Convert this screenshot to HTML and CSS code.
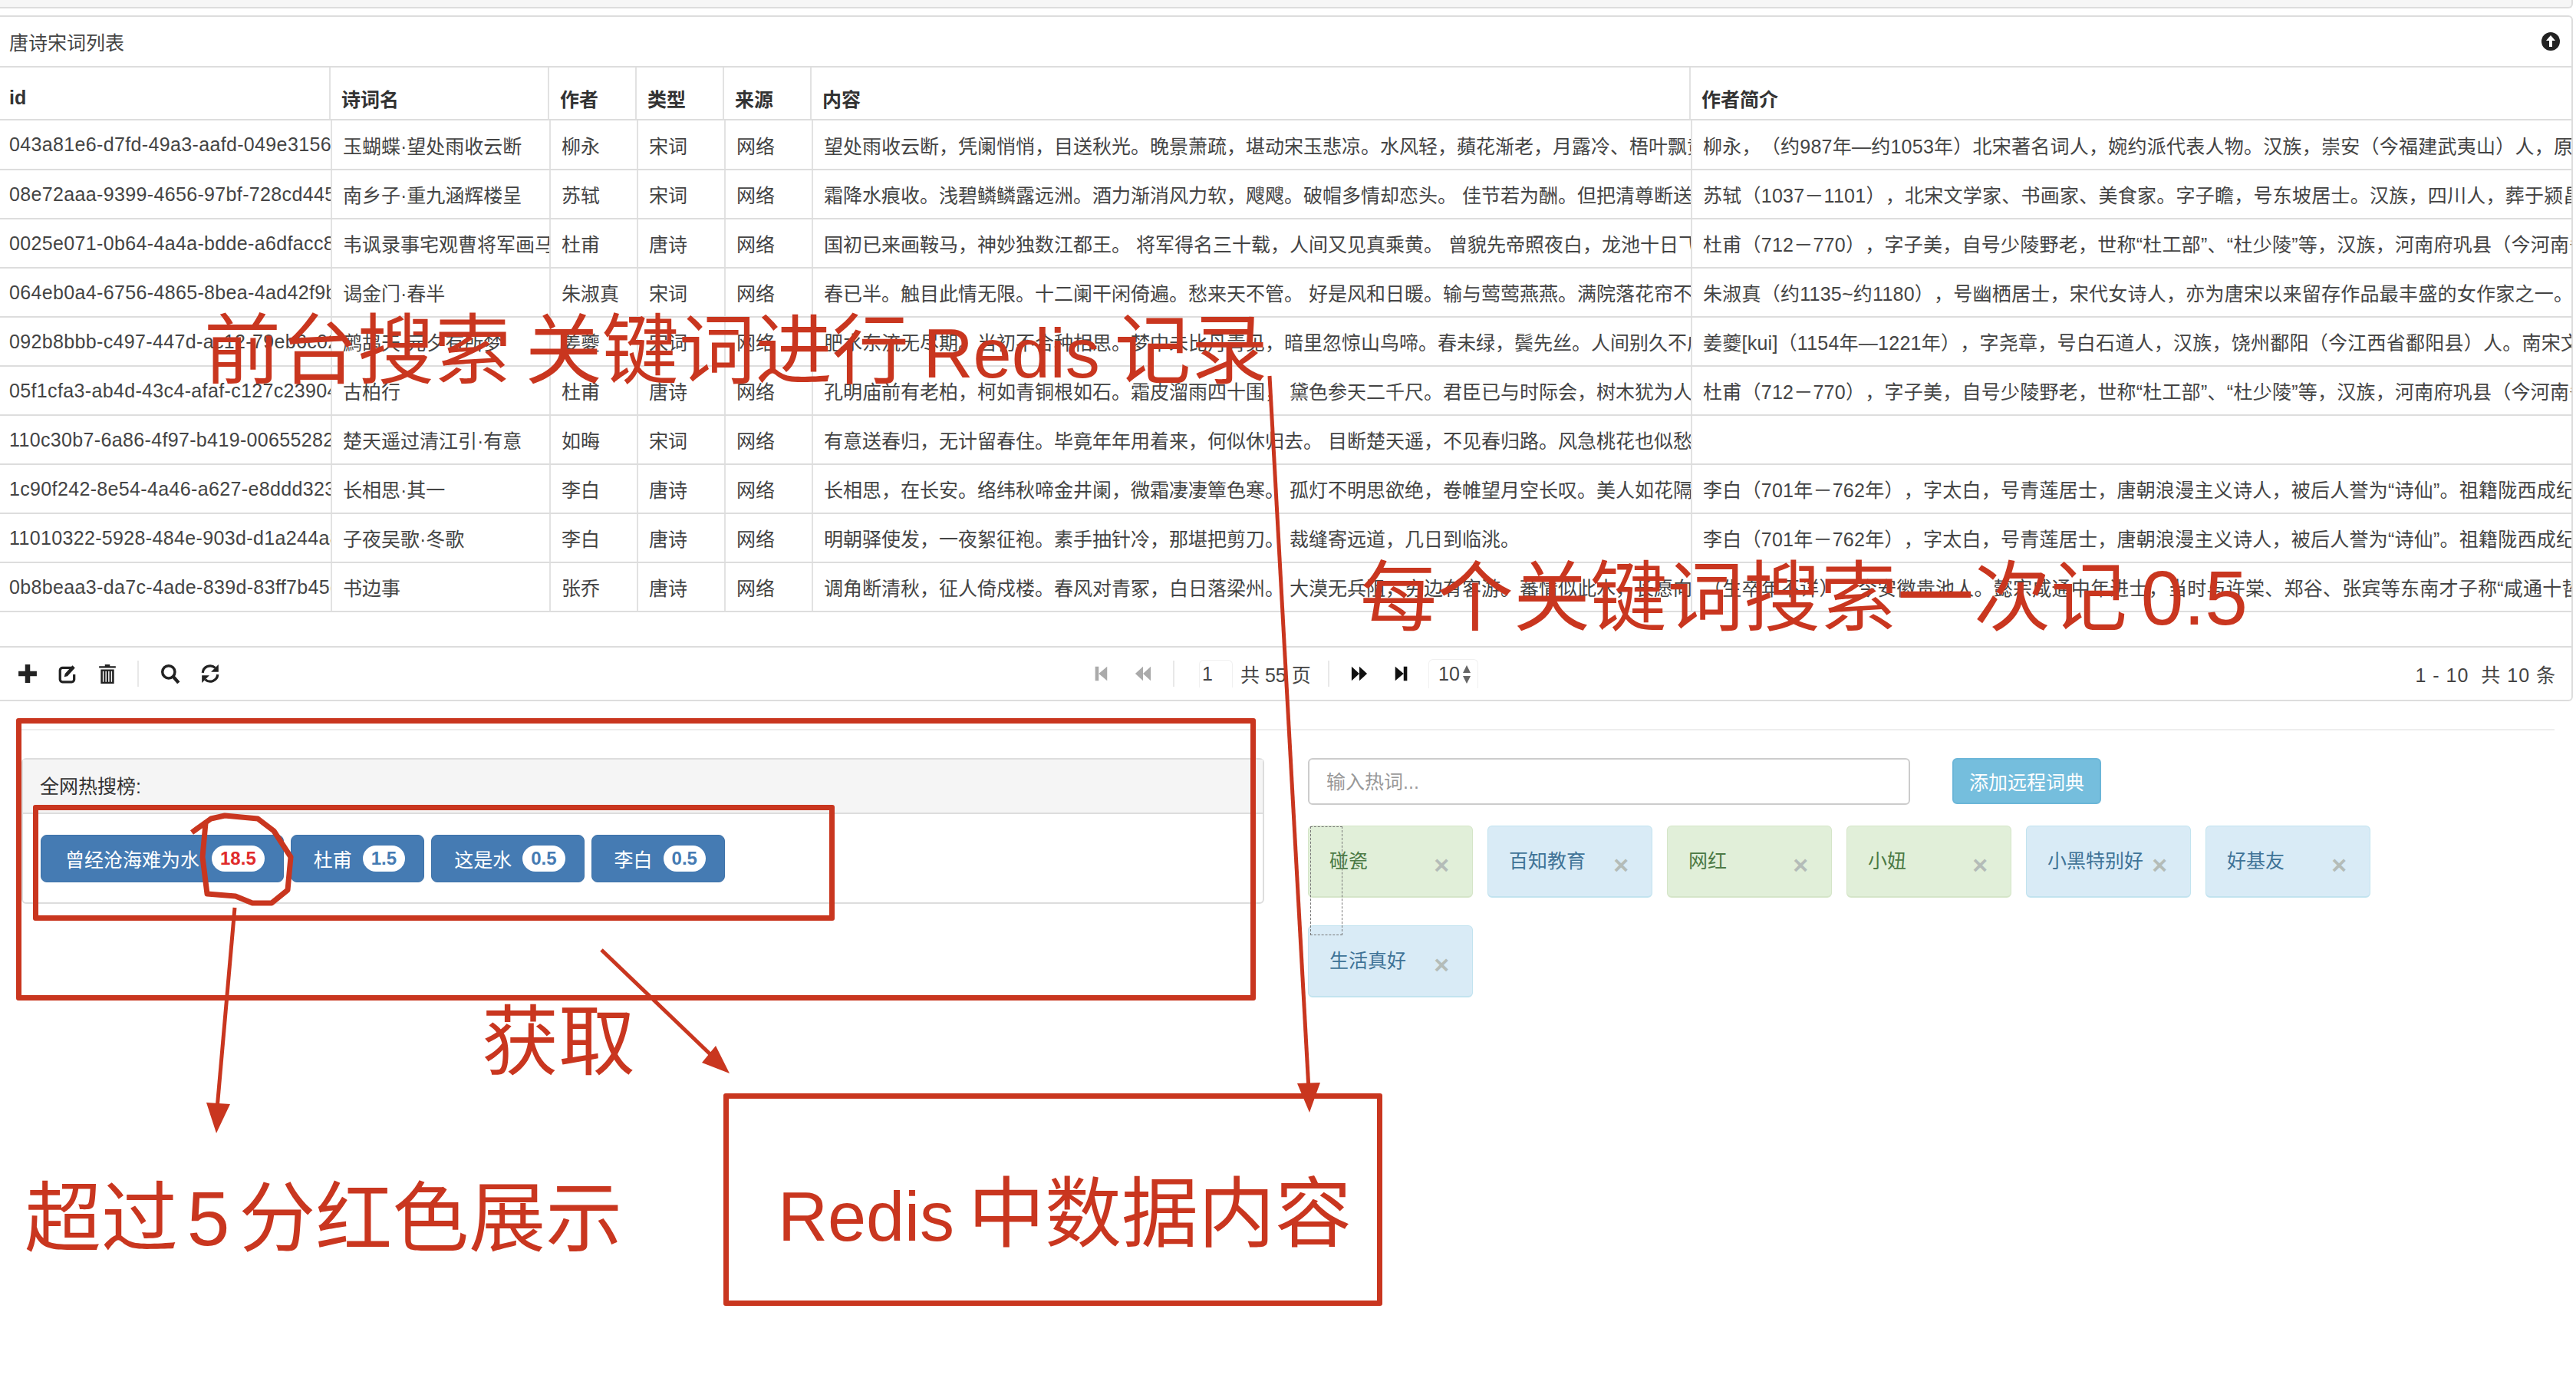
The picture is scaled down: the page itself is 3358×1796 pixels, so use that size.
FILE: index.html
```html
<!DOCTYPE html>
<html lang="zh-CN">
<head>
  <meta charset="UTF-8" />
  <title>唐诗宋词列表</title>
  <link rel="stylesheet" href="styles.css">
</head>
<body>
  <div class="top-strip"></div>

  <section class="grid-panel">
    <header class="grid-title">
      <span>唐诗宋词列表</span>
      <svg class="collapse-icon" viewBox="0 0 24 24" width="24" height="24"><circle cx="12" cy="12" r="12" fill="#222"/><path d="M12 4l6 7h-4v8h-4v-8H6z" fill="#fff"/></svg>
    </header>

    <table class="grid-table grid-head">
      <colgroup><col class="c-id-h"><col class="c-name"><col class="c-small"><col class="c-small"><col class="c-small"><col class="c-content"><col class="c-intro-h"></colgroup>
      <tr><th>id</th><th>诗词名</th><th>作者</th><th>类型</th><th>来源</th><th>内容</th><th>作者简介</th></tr>
    </table>

    <table class="grid-table grid-body">
      <colgroup><col class="c-id"><col class="c-name"><col class="c-small"><col class="c-small"><col class="c-small"><col class="c-content"><col class="c-intro"></colgroup>
      <tr><td>043a81e6-d7fd-49a3-aafd-049e31562c8f</td><td>玉蝴蝶·望处雨收云断</td><td>柳永</td><td>宋词</td><td>网络</td><td>望处雨收云断，凭阑悄悄，目送秋光。晚景萧疏，堪动宋玉悲凉。水风轻，蘋花渐老，月露冷、梧叶飘黄。</td><td>柳永，（约987年—约1053年）北宋著名词人，婉约派代表人物。汉族，崇安（今福建武夷山）人，原名三变，字景庄。</td></tr>
      <tr><td>08e72aaa-9399-4656-97bf-728cd4451c2a</td><td>南乡子·重九涵辉楼呈</td><td>苏轼</td><td>宋词</td><td>网络</td><td>霜降水痕收。浅碧鳞鳞露远洲。酒力渐消风力软，飕飕。破帽多情却恋头。 佳节若为酬。但把清尊断送秋。</td><td>苏轼（1037－1101），北宋文学家、书画家、美食家。字子瞻，号东坡居士。汉族，四川人，葬于颍昌。</td></tr>
      <tr><td>0025e071-0b64-4a4a-bdde-a6dfacc8e1d3</td><td>韦讽录事宅观曹将军画马图</td><td>杜甫</td><td>唐诗</td><td>网络</td><td>国初已来画鞍马，神妙独数江都王。 将军得名三十载，人间又见真乘黄。 曾貌先帝照夜白，龙池十日飞霹雳。</td><td>杜甫（712－770），字子美，自号少陵野老，世称“杜工部”、“杜少陵”等，汉族，河南府巩县（今河南省巩义市）人。</td></tr>
      <tr><td>064eb0a4-6756-4865-8bea-4ad42f9b70c1</td><td>谒金门·春半</td><td>朱淑真</td><td>宋词</td><td>网络</td><td>春已半。触目此情无限。十二阑干闲倚遍。愁来天不管。 好是风和日暖。输与莺莺燕燕。满院落花帘不卷。</td><td>朱淑真（约1135~约1180），号幽栖居士，宋代女诗人，亦为唐宋以来留存作品最丰盛的女作家之一。</td></tr>
      <tr><td>092b8bbb-c497-447d-ac12-79eb6c02a4f7</td><td>鹧鸪天·元夕有所梦</td><td>姜夔</td><td>宋词</td><td>网络</td><td>肥水东流无尽期。当初不合种相思。梦中未比丹青见，暗里忽惊山鸟啼。春未绿，鬓先丝。人间别久不成悲。</td><td>姜夔[kui]（1154年—1221年），字尧章，号白石道人，汉族，饶州鄱阳（今江西省鄱阳县）人。南宋文学家、音乐家。</td></tr>
      <tr><td>05f1cfa3-ab4d-43c4-afaf-c127c23904be</td><td>古柏行</td><td>杜甫</td><td>唐诗</td><td>网络</td><td>孔明庙前有老柏，柯如青铜根如石。霜皮溜雨四十围， 黛色参天二千尺。君臣已与时际会，树木犹为人爱惜。</td><td>杜甫（712－770），字子美，自号少陵野老，世称“杜工部”、“杜少陵”等，汉族，河南府巩县（今河南省巩义市）人。</td></tr>
      <tr><td>110c30b7-6a86-4f97-b419-006552827d9e</td><td>楚天遥过清江引·有意</td><td>如晦</td><td>宋词</td><td>网络</td><td>有意送春归，无计留春住。毕竟年年用着来，何似休归去。 目断楚天遥，不见春归路。风急桃花也似愁，点点飞红雨。</td><td></td></tr>
      <tr><td>1c90f242-8e54-4a46-a627-e8ddd3235b06</td><td>长相思·其一</td><td>李白</td><td>唐诗</td><td>网络</td><td>长相思，在长安。络纬秋啼金井阑，微霜凄凄簟色寒。 孤灯不明思欲绝，卷帷望月空长叹。美人如花隔云端。</td><td>李白（701年－762年），字太白，号青莲居士，唐朝浪漫主义诗人，被后人誉为“诗仙”。祖籍陇西成纪。</td></tr>
      <tr><td>11010322-5928-484e-903d-d1a244a8f312</td><td>子夜吴歌·冬歌</td><td>李白</td><td>唐诗</td><td>网络</td><td>明朝驿使发，一夜絮征袍。素手抽针冷，那堪把剪刀。 裁缝寄远道，几日到临洮。</td><td>李白（701年－762年），字太白，号青莲居士，唐朝浪漫主义诗人，被后人誉为“诗仙”。祖籍陇西成纪。</td></tr>
      <tr><td>0b8beaa3-da7c-4ade-839d-83ff7b45c6a0</td><td>书边事</td><td>张乔</td><td>唐诗</td><td>网络</td><td>调角断清秋，征人倚戍楼。春风对青冢，白日落梁州。 大漠无兵阻，穷边有客游。蕃情似此水，长愿向南流。</td><td>（生卒年不详），今安徽贵池人。懿宗咸通中年进士，当时与许棠、郑谷、张宾等东南才子称“咸通十哲”。</td></tr>
    </table>

    <footer class="grid-toolbar">
      <div class="tool-group">
        <svg class="tool" viewBox="0 0 24 24"><path d="M9 1h6v8h8v6h-8v8H9v-8H1V9h8z" fill="#222"/></svg>
        <svg class="tool" viewBox="0 0 24 24"><path d="M17 5H6a3 3 0 0 0-3 3v11a3 3 0 0 0 3 3h11a3 3 0 0 0 3-3v-6" fill="none" stroke="#222" stroke-width="3"/><path d="M9 12l9-10 3 3-9 10-4 1z" fill="#222"/></svg>
        <svg class="tool" viewBox="0 0 24 24"><path d="M2 3h7V1h6v2h7v2H2zM4 7h16v17H4z" fill="#222"/><path d="M7 9v13M10.3 9v13M13.7 9v13M17 9v13" stroke="#fff" stroke-width="1.3"/></svg>
        <span class="tool-sep"></span>
        <svg class="tool" viewBox="0 0 24 24"><circle cx="10" cy="10" r="7.5" fill="none" stroke="#222" stroke-width="3.2"/><path d="M15 15l7 8" stroke="#222" stroke-width="4"/></svg>
        <svg class="tool" viewBox="0 0 24 24"><path d="M3 11a9 9 0 0 1 15-6" fill="none" stroke="#222" stroke-width="3"/><path d="M22 1v9h-9z" fill="#222"/><path d="M21 13a9 9 0 0 1-15 6" fill="none" stroke="#222" stroke-width="3"/><path d="M2 23v-9h9z" fill="#222"/></svg>
      </div>

      <div class="pager">
        <svg class="pg" viewBox="0 0 24 24"><path d="M4 2h5v20H4zM21 2v20L9 12z" fill="#aaa"/></svg>
        <svg class="pg pg-prev" viewBox="0 0 24 24"><path d="M12 2v20L1 12zM23 2v20L12 12z" fill="#aaa"/></svg>
        <span class="tool-sep pager-sep"></span>
        <span class="pg-input">1</span>
        <span class="pg-total">共 55 页</span>
        <span class="tool-sep pager-sep-2"></span>
        <svg class="pg pg-next" viewBox="0 0 24 24"><path d="M1 2v20l11-10zM12 2v20l11-10z" fill="#111"/></svg>
        <svg class="pg pg-last" viewBox="0 0 24 24"><path d="M3 2v20l12-10zM15 2h5v20h-5z" fill="#111"/></svg>
        <span class="pg-select">10
          <svg viewBox="0 0 10 26" width="10" height="26"><path d="M5 1l5 10H0zM5 25L0 15h10z" fill="#666"/></svg>
        </span>
      </div>

      <div class="grid-count">1 - 10&nbsp;&nbsp;共 10 条</div>
    </footer>
  </section>

  <hr class="divider">

  <main class="hot-row">
    <section class="hot-panel">
      <div class="hot-heading">全网热搜榜:</div>
      <div class="hot-body">
        <button class="hot-btn">曾经沧海难为水<span class="badge badge-red">18.5</span></button>
        <button class="hot-btn">杜甫<span class="badge">1.5</span></button>
        <button class="hot-btn">这是水<span class="badge">0.5</span></button>
        <button class="hot-btn">李白<span class="badge">0.5</span></button>
      </div>
    </section>

    <section class="dict">
      <div class="dict-form">
        <div class="dict-input">输入热词...</div>
        <button class="dict-add">添加远程词典</button>
      </div>
      <div class="tags">
        <div class="tag tag-green">碰瓷<span class="tag-x">×</span></div>
        <div class="tag tag-blue">百知教育<span class="tag-x">×</span></div>
        <div class="tag tag-green">网红<span class="tag-x">×</span></div>
        <div class="tag tag-green">小妞<span class="tag-x">×</span></div>
        <div class="tag tag-blue">小黑特别好<span class="tag-x">×</span></div>
        <div class="tag tag-blue">好基友<span class="tag-x">×</span></div>
        <div class="tag tag-blue">生活真好<span class="tag-x">×</span></div>
      </div>
    </section>
  </main>

  <div class="drag-ghost"></div>

  <!-- 红色标注 -->
  <div class="mark-box box-outer"></div>
  <div class="mark-box box-inner"></div>
  <div class="mark-box box-redis"></div>
  <svg class="mark-lines" viewBox="0 0 3358 1796" width="3358" height="1796">
    <g fill="none" stroke="#c9361f" stroke-width="5">
      <path d="M1655 490L1706 1420"/>
      <path d="M306 1183L283 1445"/>
      <path d="M784 1238L930 1378" />
    </g>
    <path d="M1691 1412l30-1-14 39z" fill="#c9361f"/>
    <path d="M269 1437l31 2-18 38z" fill="#c9361f"/>
    <path d="M933 1363l18 36-36-14z" fill="#c9361f"/>
    <path d="M250 1085L275 1067 293 1063 336 1067 357 1083 379 1117 375 1160 354 1177 329 1177 307 1168 270 1165 264 1117 268 1073" fill="none" stroke="#c9361f" stroke-width="7" stroke-linejoin="round"/>
  </svg>
  <div class="mark-text text-search">前台搜索 关键词进行 <span class="mark-latin">Redis</span> 记录</div>
  <div class="mark-text text-score">每个关键词搜索一次记 0.5</div>
  <div class="mark-text text-get">获取</div>
  <div class="mark-text text-over">超过 5 分红色展示</div>
  <div class="mark-text text-redis"><span class="mark-latin">Redis</span> 中数据内容</div>
</body>
</html>
```

FILE: styles.css
```css
* {
  box-sizing: border-box;
}

html, body {
  margin: 0;
  padding: 0;
}

body {
  position: relative;
  width: 3358px;
  height: 1796px;
  overflow: hidden;
  background: #fff;
  color: #333;
  font-family: "Liberation Sans", "Noto Sans CJK SC", sans-serif;
  font-size: 25px;
  text-spacing-trim: space-all;
}

.top-strip {
  width: 3354px;
  height: 11px;
  background: #f6f6f6;
  border-bottom: 2px solid #ddd;
  border-right: 2px solid #ddd;
  border-radius: 0 0 6px 0;
}

/* 表格面板 */
.grid-panel {
  width: 3354px;
  margin-top: 9px;
  border: 2px solid #ddd;
  border-left: none;
  border-radius: 0 6px 6px 0;
}

.grid-title {
  display: flex;
  justify-content: space-between;
  align-items: center;
  height: 66px;
  padding: 0 16px 0 12px;
  border-bottom: 2px solid #ddd;
  color: #444;
}

.collapse-icon {
  margin-right: -1px;
}

.grid-table {
  border-collapse: collapse;
  table-layout: fixed;
  width: 3352px;
}

.grid-table th, .grid-table td {
  overflow: hidden;
  white-space: nowrap;
  padding: 0 12px 0 14px;
  border-right: 2px solid #e2e2e2;
  border-bottom: 2px solid #ddd;
  text-align: left;
  height: 64px;
}

.grid-table th:first-child, .grid-table td:first-child {
  padding-left: 12px;
  padding-right: 0;
}

.grid-table td:first-child {
  letter-spacing: 0.35px;
}

.grid-table td:last-child, .grid-table th:last-child {
  border-right: none;
  padding-right: 0;
}

.grid-table td:last-child {
  letter-spacing: 0.25px;
}

.grid-table th {
  height: 68px;
  padding-top: 12px;
  font-weight: 700;
  color: #333;
}

.grid-table td {
  color: #444;
}

.c-id-h { width: 430px; }
.c-id { width: 432px; }
.c-name { width: 285px; }
.c-small { width: 114px; }
.c-content { width: 1146px; }

.grid-toolbar {
  position: relative;
  display: flex;
  align-items: center;
  height: 70px;
  margin-top: 44px;
  border-top: 2px solid #ddd;
  color: #444;
}

.tool-group {
  display: flex;
  align-items: center;
  padding-left: 23px;
}

.tool {
  width: 26px;
  height: 26px;
  margin-right: 26px;
}

.tool-sep {
  width: 2px;
  height: 34px;
  background: #e8e8e8;
  margin: 0 28px 0 0;
}

.pager {
  display: flex;
  align-items: center;
  margin-left: 1111px;
}

.pg {
  width: 22px;
  height: 24px;
}

.pg-prev {
  margin-left: 33px;
}

.pager-sep {
  margin: 0 0 0 28px;
}

.pg-input {
  width: 44px;
  height: 36px;
  margin-left: 32px;
  padding-left: 3px;
  line-height: 34px;
  border: 1px solid #f0f0f0;
  border-bottom: none;
  border-radius: 6px 6px 0 0;
}

.pg-total {
  margin-left: 10px;
  width: 100px;
}

.pager-sep-2 {
  margin: 0 0 0 14px;
}

.pg-next {
  margin-left: 28px;
}

.pg-last {
  margin-left: 33px;
}

.pg-select {
  display: flex;
  align-items: center;
  gap: 4px;
  width: 65px;
  height: 38px;
  margin-left: 24px;
  padding-left: 12px;
  border: 1px solid #f0f0f0;
  border-bottom: none;
  border-radius: 6px 6px 0 0;
}

.grid-count {
  margin-left: auto;
  padding-right: 20px;
  letter-spacing: 1px;
}

.divider {
  width: 3302px;
  height: 2px;
  margin: 36px 0 0 28px;
  border: none;
  background: #eee;
}

.hot-row {
  display: flex;
  align-items: flex-start;
  margin: 36px 0 0 28px;
}

/* 热搜榜 */
.hot-panel {
  width: 1620px;
  border: 2px solid #ddd;
  border-radius: 6px;
}

.hot-heading {
  height: 71px;
  padding: 15px 22px 0;
  background: #f5f5f5;
  border-bottom: 2px solid #ddd;
  color: #333;
}

.hot-body {
  display: flex;
  gap: 9px;
  height: 115px;
  padding: 27px 23px 0;
}

.hot-btn {
  display: flex;
  align-items: center;
  height: 62px;
  padding: 0 24px 0 29px;
  border: 1px solid #3e72a8;
  border-radius: 8px;
  background: #457bb3;
  color: #fff;
  font: inherit;
}

.badge {
  display: inline-block;
  margin-left: 14px;
  height: 34px;
  padding: 0 11px;
  border-radius: 17px;
  background: #fff;
  color: #457bb3;
  font-size: 24px;
  font-weight: 700;
  line-height: 34px;
}

.hot-btn:first-child {
  padding: 0 24px 0 31px;
}

.badge-red {
  margin-left: 16px;
  color: #e02b2b;
}

/* 词典 */
.dict {
  margin-left: 57px;
  width: 1400px;
}

.dict-form {
  display: flex;
  gap: 55px;
}

.dict-input {
  width: 785px;
  height: 61px;
  padding: 0 22px;
  line-height: 59px;
  border: 2px solid #ccc;
  border-radius: 6px;
  color: #999;
}

.dict-add {
  width: 194px;
  height: 60px;
  border: 2px solid #6bb6d8;
  border-radius: 6px;
  background: #75bedd;
  color: #fff;
  font: inherit;
}

.tags {
  display: flex;
  flex-wrap: wrap;
  gap: 36px 19px;
  margin-top: 27px;
}

.tag {
  position: relative;
  width: 215px;
  height: 94px;
  padding: 0 0 6px 27px;
  display: flex;
  align-items: center;
  border: 1px solid;
  border-bottom-width: 2px;
  border-radius: 6px;
}

.tag-green {
  background: #e1efd9;
  border-color: #d5e5c8;
  color: #4c7a45;
}

.tag-blue {
  background: #d9ebf6;
  border-color: #c2e3ef;
  color: #3f7397;
}

.tag-x {
  position: absolute;
  right: 30px;
  top: 33px;
  color: #b4bcb8;
  font-size: 34px;
  font-weight: 700;
  line-height: 34px;
}

.drag-ghost {
  position: absolute;
  left: 1708px;
  top: 1077px;
  width: 42px;
  height: 142px;
  border: 1px dashed #777;
}

/* 标注层，压在页面上方 */
.mark-box {
  position: absolute;
  border: 7px solid #c9361f;
  border-radius: 3px;
}

.box-outer {
  left: 21px;
  top: 936px;
  width: 1616px;
  height: 368px;
}

.box-inner {
  left: 43px;
  top: 1049px;
  width: 1045px;
  height: 151px;
}

.box-redis {
  left: 943px;
  top: 1425px;
  width: 859px;
  height: 277px;
}

.mark-lines {
  position: absolute;
  left: 0;
  top: 0;
}

.mark-text {
  position: absolute;
  color: #c9361f;
  font-size: 100px;
  line-height: 1;
  white-space: nowrap;
  word-spacing: -10px;
}

.mark-latin {
  font-size: 90px;
}

.text-search { left: 266px; top: 407px; word-spacing: -9px; }
.text-score { left: 1773px; top: 729px; }
.text-get { left: 628px; top: 1308px; }
.text-over { left: 32px; top: 1538px; word-spacing: -16px; }
.text-redis { left: 1014px; top: 1532px; word-spacing: -10px; }
```
